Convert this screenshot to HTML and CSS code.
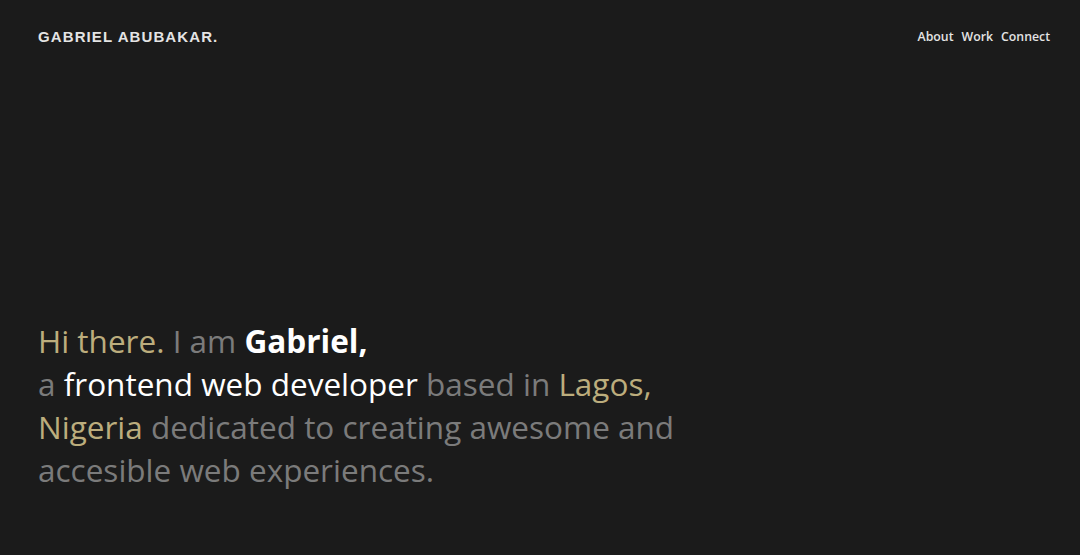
FILE: index.html
```
<!DOCTYPE html>
<html lang="en">
<head>
<meta charset="utf-8">
<title>Gabriel Abubakar</title>
<link rel="stylesheet" href="styles.css">
</head>
<body>
<div class="page">
  <header class="header">
    <a class="logo" href="#">GABRIEL ABUBAKAR.</a>
    <nav class="nav">
      <a href="#">About</a>
      <a href="#">Work</a>
      <a href="#">Connect</a>
    </nav>
  </header>
  <main class="hero">
    <h1 class="intro">
      <span class="gold">Hi there.</span> <span class="muted">I am</span> <strong class="white">Gabriel,</strong><br>
      <span class="muted">a</span> <span class="white">frontend web developer</span> <span class="muted">based in</span> <span class="gold">Lagos, Nigeria</span> <span class="muted">dedicated to creating awesome and accesible web experiences.</span>
    </h1>
  </main>
</div>
</body>
</html>
```
FILE: styles.css
```
html, body {
  margin: 0;
  padding: 0;
  background: #1b1b1b;
}
.page {
  height: 555px;
  display: flex;
  flex-direction: column;
  padding: 0 30px 0 38px;
  box-sizing: border-box;
}
.header {
  display: flex;
  justify-content: space-between;
  align-items: center;
  height: 73px;
}
.logo {
  font-family: "Liberation Sans", Arial, sans-serif;
  font-weight: 700;
  font-size: 15px;
  letter-spacing: 1.1px;
  color: #e4e4e4;
  text-decoration: none;
}
.nav {
  display: flex;
  gap: 8px;
}
.nav a {
  font-family: "Open Sans", sans-serif;
  font-weight: 600;
  font-size: 12.3px;
  color: #e4e4e4;
  text-decoration: none;
}
.hero {
  flex: 1;
  display: flex;
  align-items: flex-end;
  padding-bottom: 64px;
}
.intro {
  margin: 0;
  max-width: 700px;
  font-family: "Open Sans", sans-serif;
  font-weight: 400;
  font-size: 31.5px;
  line-height: 43px;
}
.gold { color: #bcad7d; }
.muted { color: #7b7b7b; }
.white { color: #ffffff; }
strong.white { font-weight: 700; }
```
